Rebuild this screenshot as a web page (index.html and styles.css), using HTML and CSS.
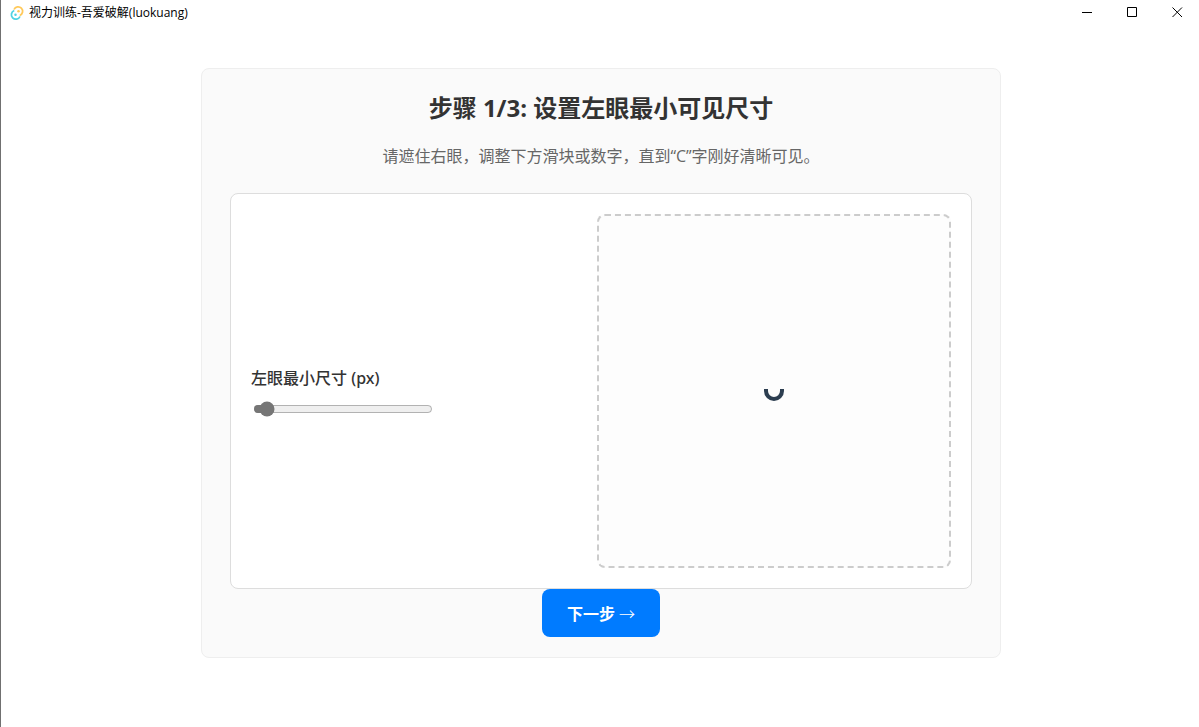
FILE: index.html
```html
<!DOCTYPE html>
<html lang="zh-CN">
<head>
  <meta charset="utf-8">
  <meta name="viewport" content="width=device-width, initial-scale=1">
  <title>视力训练-吾爱破解(luokuang)</title>
  <link rel="stylesheet" href="styles.css">
</head>
<body>
  <header class="titlebar">
    <svg class="logo" viewBox="0 0 32 32" fill="none" aria-hidden="true">
      <path d="M10 9A9 9 0 1 1 21.5 21" stroke="#ffc95a" stroke-width="3.5"/>
      <path d="M22 23A9 9 0 1 1 10.5 11" stroke="#4fd3e2" stroke-width="3.5"/>
      <circle cx="19" cy="12.5" r="2.5" fill="#ffc95a"/>
      <circle cx="13" cy="19.5" r="2.5" fill="#4fd3e2"/>
    </svg>
    <span class="app-name">视力训练-吾爱破解(luokuang)</span>
    <div class="window-controls">
      <button type="button" aria-label="最小化">
        <svg viewBox="0 0 11 11"><path d="M0 5.5h10"/></svg>
      </button>
      <button type="button" aria-label="最大化">
        <svg viewBox="0 0 11 11"><path d="M.5.5h9v9h-9z"/></svg>
      </button>
      <button type="button" aria-label="关闭">
        <svg viewBox="0 0 11 11"><path d="M.5.5l9.5 9.5M10 .5L.5 10"/></svg>
      </button>
    </div>
  </header>

  <main class="page">
    <section class="card">
      <h1>步骤 1/3: 设置左眼最小可见尺寸</h1>
      <p class="hint">请遮住右眼，调整下方滑块或数字，直到“C”字刚好清晰可见。</p>

      <div class="panel">
        <div class="control">
          <label for="left-size">左眼最小尺寸 (px)</label>
          <input type="range" id="left-size" min="0" max="200" value="7">
        </div>
        <div class="preview">
          <svg class="symbol" viewBox="0 0 20 20" role="img" aria-label="C">
            <path d="M2 8v2a8 8 0 0 0 16 0V8"/>
          </svg>
        </div>
      </div>

      <button type="button" class="next">下一步 <span class="arrow">→</span></button>
    </section>
  </main>
</body>
</html>
```
FILE: styles.css
```css
* {
  box-sizing: border-box;
}

body {
  margin: 0;
  min-height: 100vh;
  border-left: 1px solid #707070;
  background: #fff;
  color: #333;
  font-family: "Open Sans", "Noto Sans CJK SC", sans-serif;
  font-size: 16px;
  line-height: 24px;
}

/* 标题栏 */
.titlebar {
  display: flex;
  align-items: center;
  height: 25px;
  padding-left: 8px;
  color: #000;
  font-size: 12px;
}

.logo {
  width: 16px;
  height: 16px;
  margin-right: 4px;
}

.window-controls {
  display: flex;
  margin-left: auto;
}

.window-controls button {
  display: flex;
  align-items: center;
  justify-content: flex-end;
  width: 45px;
  height: 25px;
  padding: 0 16px 0 0;
  border: 0;
  background: none;
}

.window-controls svg {
  width: 11px;
  height: 11px;
  fill: none;
  stroke: #000;
}

/* 设置卡片 */
.page {
  padding: 43px 0 0 2px;
}

.card {
  max-width: 800px;
  margin: 0 auto;
  padding: 20px 28px;
  border: 1px solid #eee;
  border-radius: 8px;
  background: #fafafa;
  text-align: center;
}

h1 {
  margin: 0 0 17px;
  font-size: 24px;
  font-weight: 700;
  line-height: 38px;
}

.hint {
  margin: 0 0 25px;
  color: #666;
}

.panel {
  display: flex;
  align-items: center;
  justify-content: space-between;
  gap: 20px;
  padding: 20px;
  border: 1px solid #ddd;
  border-radius: 8px;
  background: #fff;
}

.control {
  display: flex;
  flex-direction: column;
  align-items: flex-start;
  gap: 11px;
}

.control label {
  font-family: "Noto Sans", "Noto Sans CJK SC", sans-serif;
  font-weight: 500;
}

.control input {
  width: 180px;
  height: 16px;
  margin: 0 2px;
  accent-color: #767676;
}

.preview {
  display: flex;
  align-items: center;
  justify-content: center;
  width: 354px;
  aspect-ratio: 1;
  border: 2px dashed #ccc;
  border-radius: 8px;
  background: #fdfdfd;
}

.symbol {
  width: 20px;
  height: 20px;
  fill: none;
  stroke: #2c3e50;
  stroke-width: 4;
}

.next {
  display: block;
  height: 48px;
  margin: 0 auto;
  padding: 0 25px;
  border: 0;
  border-radius: 8px;
  background: #007bff;
  color: #fff;
  font: inherit;
  font-weight: 700;
}

.arrow {
  font-family: "Noto Sans CJK SC", sans-serif;
  font-weight: 300;
}
```
